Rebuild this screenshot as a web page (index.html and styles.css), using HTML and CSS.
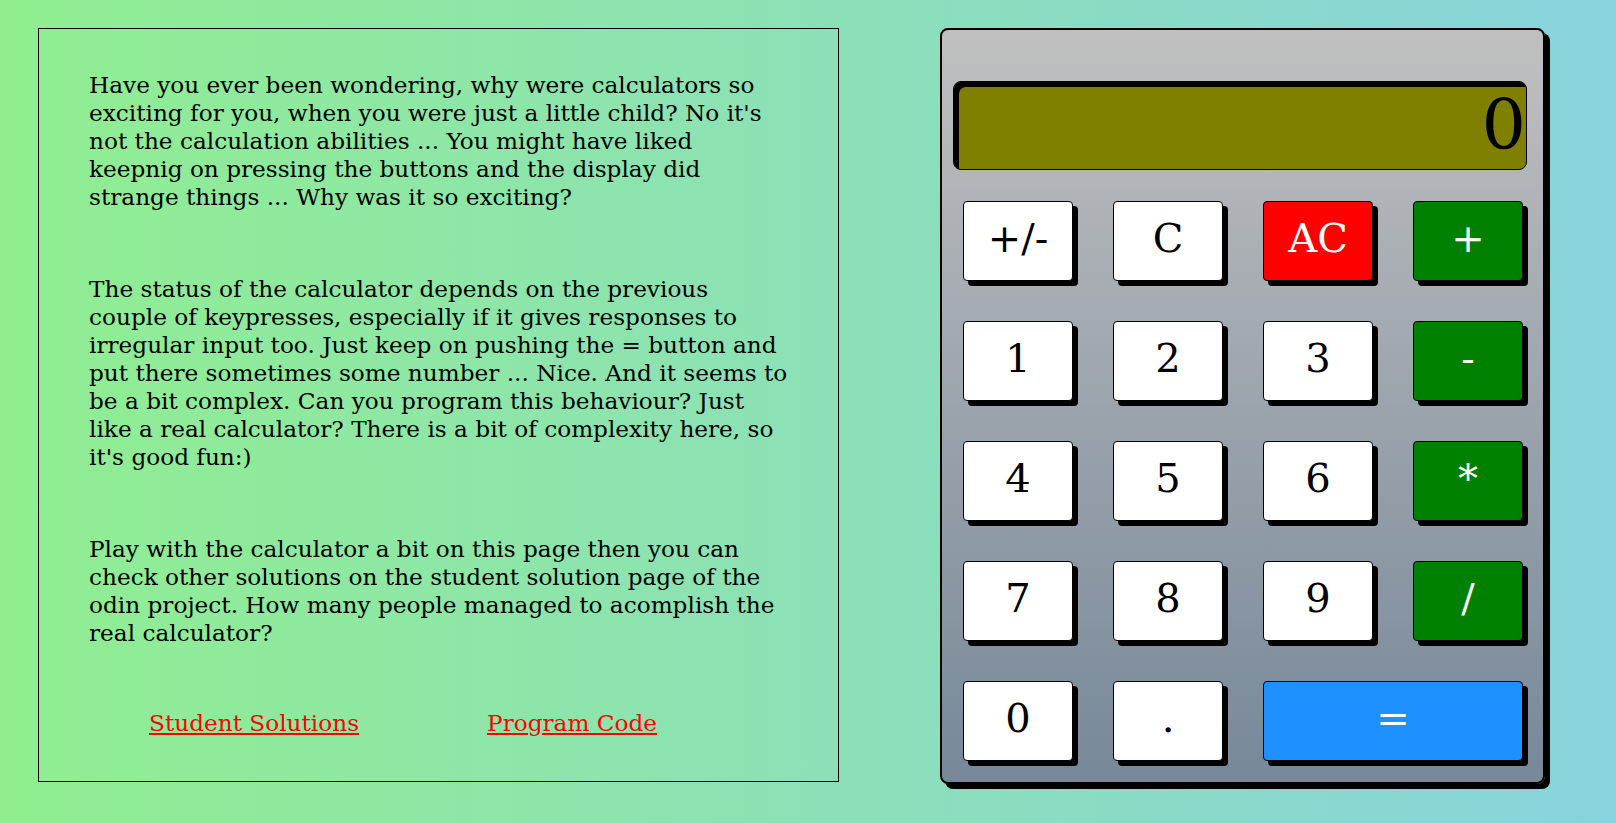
FILE: index.html
```html
<!DOCTYPE html>
<html>
<head>
<meta charset="utf-8">
<title>Calculator</title>
<link rel="stylesheet" href="styles.css">
</head>
<body>
<div class="page">
  <div class="info">
    <p>Have you ever been wondering, why were calculators so exciting for you, when you were just a little child? No it's not the calculation abilities ... You might have liked keepnig on pressing the buttons and the display did strange things ... Why was it so exciting?</p>
    <p>The status of the calculator depends on the previous couple of keypresses, especially if it gives responses to irregular input too. Just keep on pushing the = button and put there sometimes some number ... Nice. And it seems to be a bit complex. Can you program this behaviour? Just like a real calculator? There is a bit of complexity here, so it's good fun:)</p>
    <p>Play with the calculator a bit on this page then you can check other solutions on the student solution page of the odin project. How many people managed to acomplish the real calculator?</p>
    <div class="links">
      <a href="#">Student Solutions</a>
      <a href="#">Program Code</a>
    </div>
  </div>
  <div class="calc">
    <div class="display">0</div>
    <div class="keys">
      <button class="key">+/-</button>
      <button class="key">C</button>
      <button class="key red">AC</button>
      <button class="key green">+</button>
      <button class="key">1</button>
      <button class="key">2</button>
      <button class="key">3</button>
      <button class="key green">-</button>
      <button class="key">4</button>
      <button class="key">5</button>
      <button class="key">6</button>
      <button class="key green">*</button>
      <button class="key">7</button>
      <button class="key">8</button>
      <button class="key">9</button>
      <button class="key green">/</button>
      <button class="key">0</button>
      <button class="key">.</button>
      <button class="key blue wide">=</button>
    </div>
  </div>
</div>
</body>
</html>
```
FILE: styles.css
```css
html, body {
  margin: 0;
  padding: 0;
}
body {
  min-height: 100vh;
  background: linear-gradient(to right, #90ee90, #88d3dd);
  font-family: "DejaVu Serif", serif;
}
.page {
  display: flex;
  align-items: flex-start;
  padding: 28px 0 0 38px;
  gap: 101px;
}
.info {
  box-sizing: border-box;
  width: 801px;
  height: 754px;
  border: 1px solid #000;
  padding: 42px 50px 0 50px;
  font-size: 23.2px;
  line-height: 28px;
}
.info p {
  margin: 0 0 64px 0;
}
.links {
  display: flex;
  gap: 128px;
  padding-left: 60px;
  margin-top: -2px;
}
.links a {
  color: #ff0000;
}
.calc {
  box-sizing: border-box;
  width: 605px;
  height: 756px;
  border: 2px solid #000;
  border-radius: 8px;
  box-shadow: 5px 5px 0 #000;
  background: linear-gradient(to bottom, #c0c0c0, #778899);
  padding: 51px 0 0 11px;
}
.display {
  box-sizing: border-box;
  width: 574px;
  height: 89px;
  background: #808000;
  border: 1px solid #000;
  border-radius: 8px;
  box-shadow: inset 5px 5px 0 #000;
  font-size: 70px;
  line-height: 86px;
  text-align: right;
  padding-right: 0;
  color: #000;
}
.keys {
  display: grid;
  grid-template-columns: repeat(4, 110px);
  grid-auto-rows: 80px;
  column-gap: 40px;
  row-gap: 40px;
  margin: 31px 0 0 10px;
}
.key {
  box-sizing: border-box;
  border: 1px solid #000;
  border-radius: 4px;
  box-shadow: 5px 5px 0 #000;
  background: #fff;
  color: #000;
  font-family: "DejaVu Serif", serif;
  font-size: 40px;
  padding: 0 0 7px 0;
  margin: 0;
}
.red {
  background: #ff0000;
  color: #fff;
}
.green {
  background: #008000;
  color: #fff;
}
.blue {
  background: #1e90ff;
  color: #fff;
}
.wide {
  grid-column: span 2;
}
```
